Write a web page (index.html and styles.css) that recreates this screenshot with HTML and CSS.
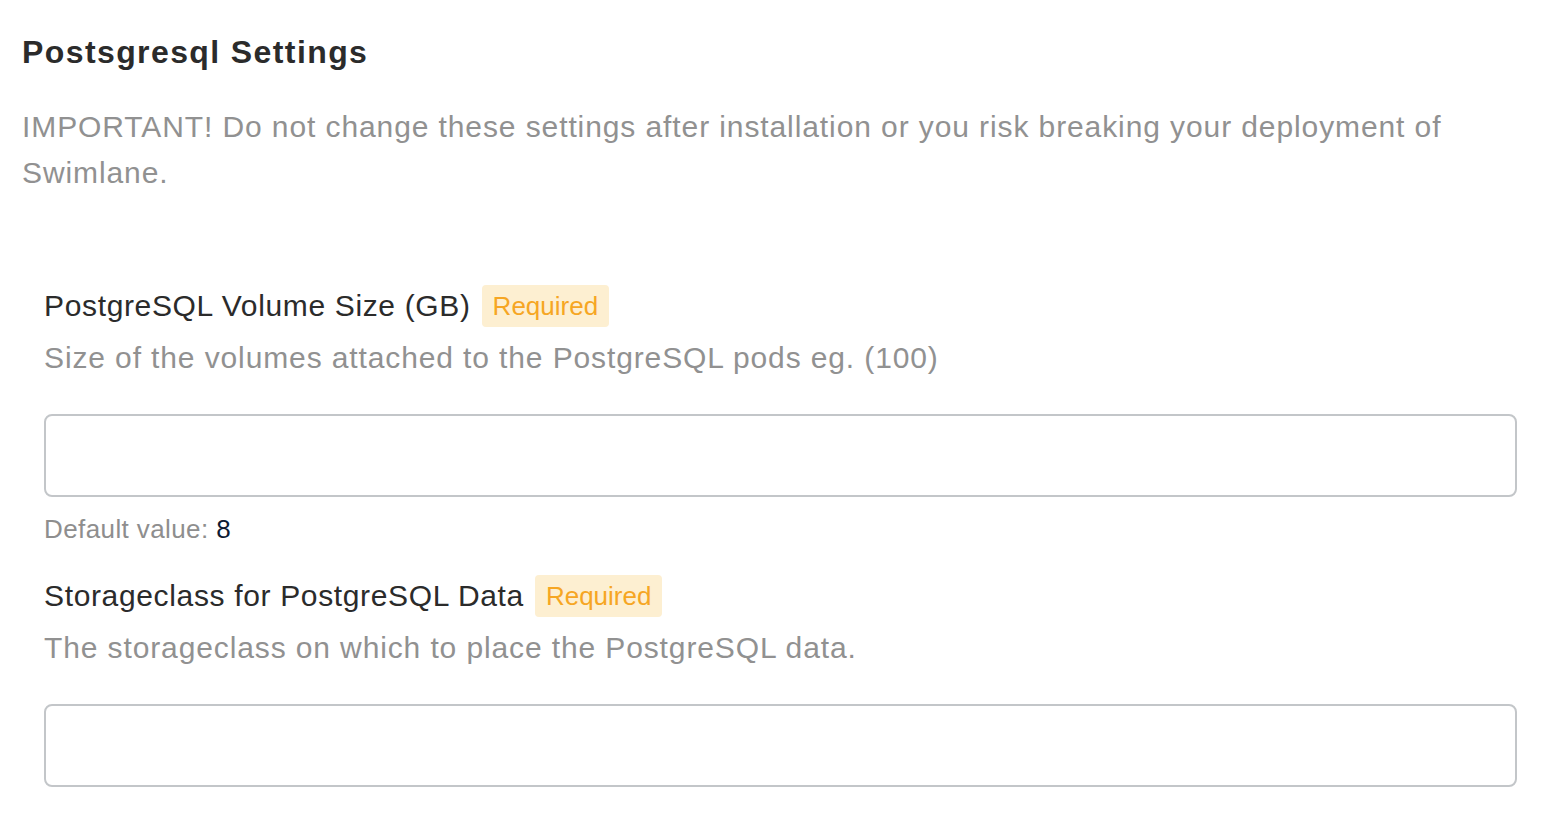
FILE: index.html
```html
<!DOCTYPE html>
<html>
<head>
<meta charset="utf-8">
<link rel="stylesheet" href="styles.css">
</head>
<body>
<div class="page">
  <h1 class="title">Postsgresql Settings</h1>
  <p class="intro">IMPORTANT! Do not change these settings after installation or you risk breaking your deployment of Swimlane.</p>
  <div class="fields">
    <div class="field">
      <div class="label-row">
        <span class="label">PostgreSQL Volume Size (GB)</span>
        <span class="badge">Required</span>
      </div>
      <div class="desc">Size of the volumes attached to the PostgreSQL pods eg. (100)</div>
      <input class="input" type="text">
      <div class="default">Default value: <span class="default-val">8</span></div>
    </div>
    <div class="field">
      <div class="label-row">
        <span class="label">Storageclass for PostgreSQL Data</span>
        <span class="badge">Required</span>
      </div>
      <div class="desc">The storageclass on which to place the PostgreSQL data.</div>
      <input class="input" type="text">
    </div>
  </div>
</div>
</body>
</html>
```
FILE: styles.css
```css
html, body {
  margin: 0;
  padding: 0;
  background: #ffffff;
}
body {
  font-family: "Liberation Sans", Arial, sans-serif;
  color: #323232;
}
.page {
  padding: 30px 22px 0 22px;
}
.title {
  margin: 0;
  font-size: 32px;
  font-weight: bold;
  line-height: 44px;
  letter-spacing: 1.4px;
  color: #2b2b2b;
}
.intro {
  margin: 30px 0 0 0;
  font-size: 30px;
  line-height: 46px;
  letter-spacing: 0.9px;
  color: #919191;
  max-width: 1460px;
}
.fields {
  padding: 0 25px 0 22px;
  margin-top: 88px;
}
.label-row {
  display: flex;
  align-items: center;
  gap: 11px;
  height: 44px;
}
.label {
  font-size: 30px;
  letter-spacing: 0.65px;
  color: #2b2b2b;
}
.badge {
  background: #fdefd1;
  color: #f6a623;
  font-size: 26px;
  line-height: 42px;
  padding: 0 11px;
  border-radius: 4px;
}
.desc {
  margin-top: 10px;
  font-size: 30px;
  line-height: 40px;
  letter-spacing: 0.88px;
  color: #919191;
}
.input {
  display: block;
  box-sizing: border-box;
  width: 100%;
  height: 83px;
  margin: 36px 0 0 0;
  border: 2px solid #c3c6c9;
  border-radius: 8px;
  background: #fff;
  outline: none;
}
.default {
  margin-top: 14px;
  font-size: 26px;
  line-height: 36px;
  letter-spacing: 0.4px;
  color: #8e8e8e;
}
.default-val {
  color: #0d1b33;
}
.field + .field {
  margin-top: 27px;
}
```
